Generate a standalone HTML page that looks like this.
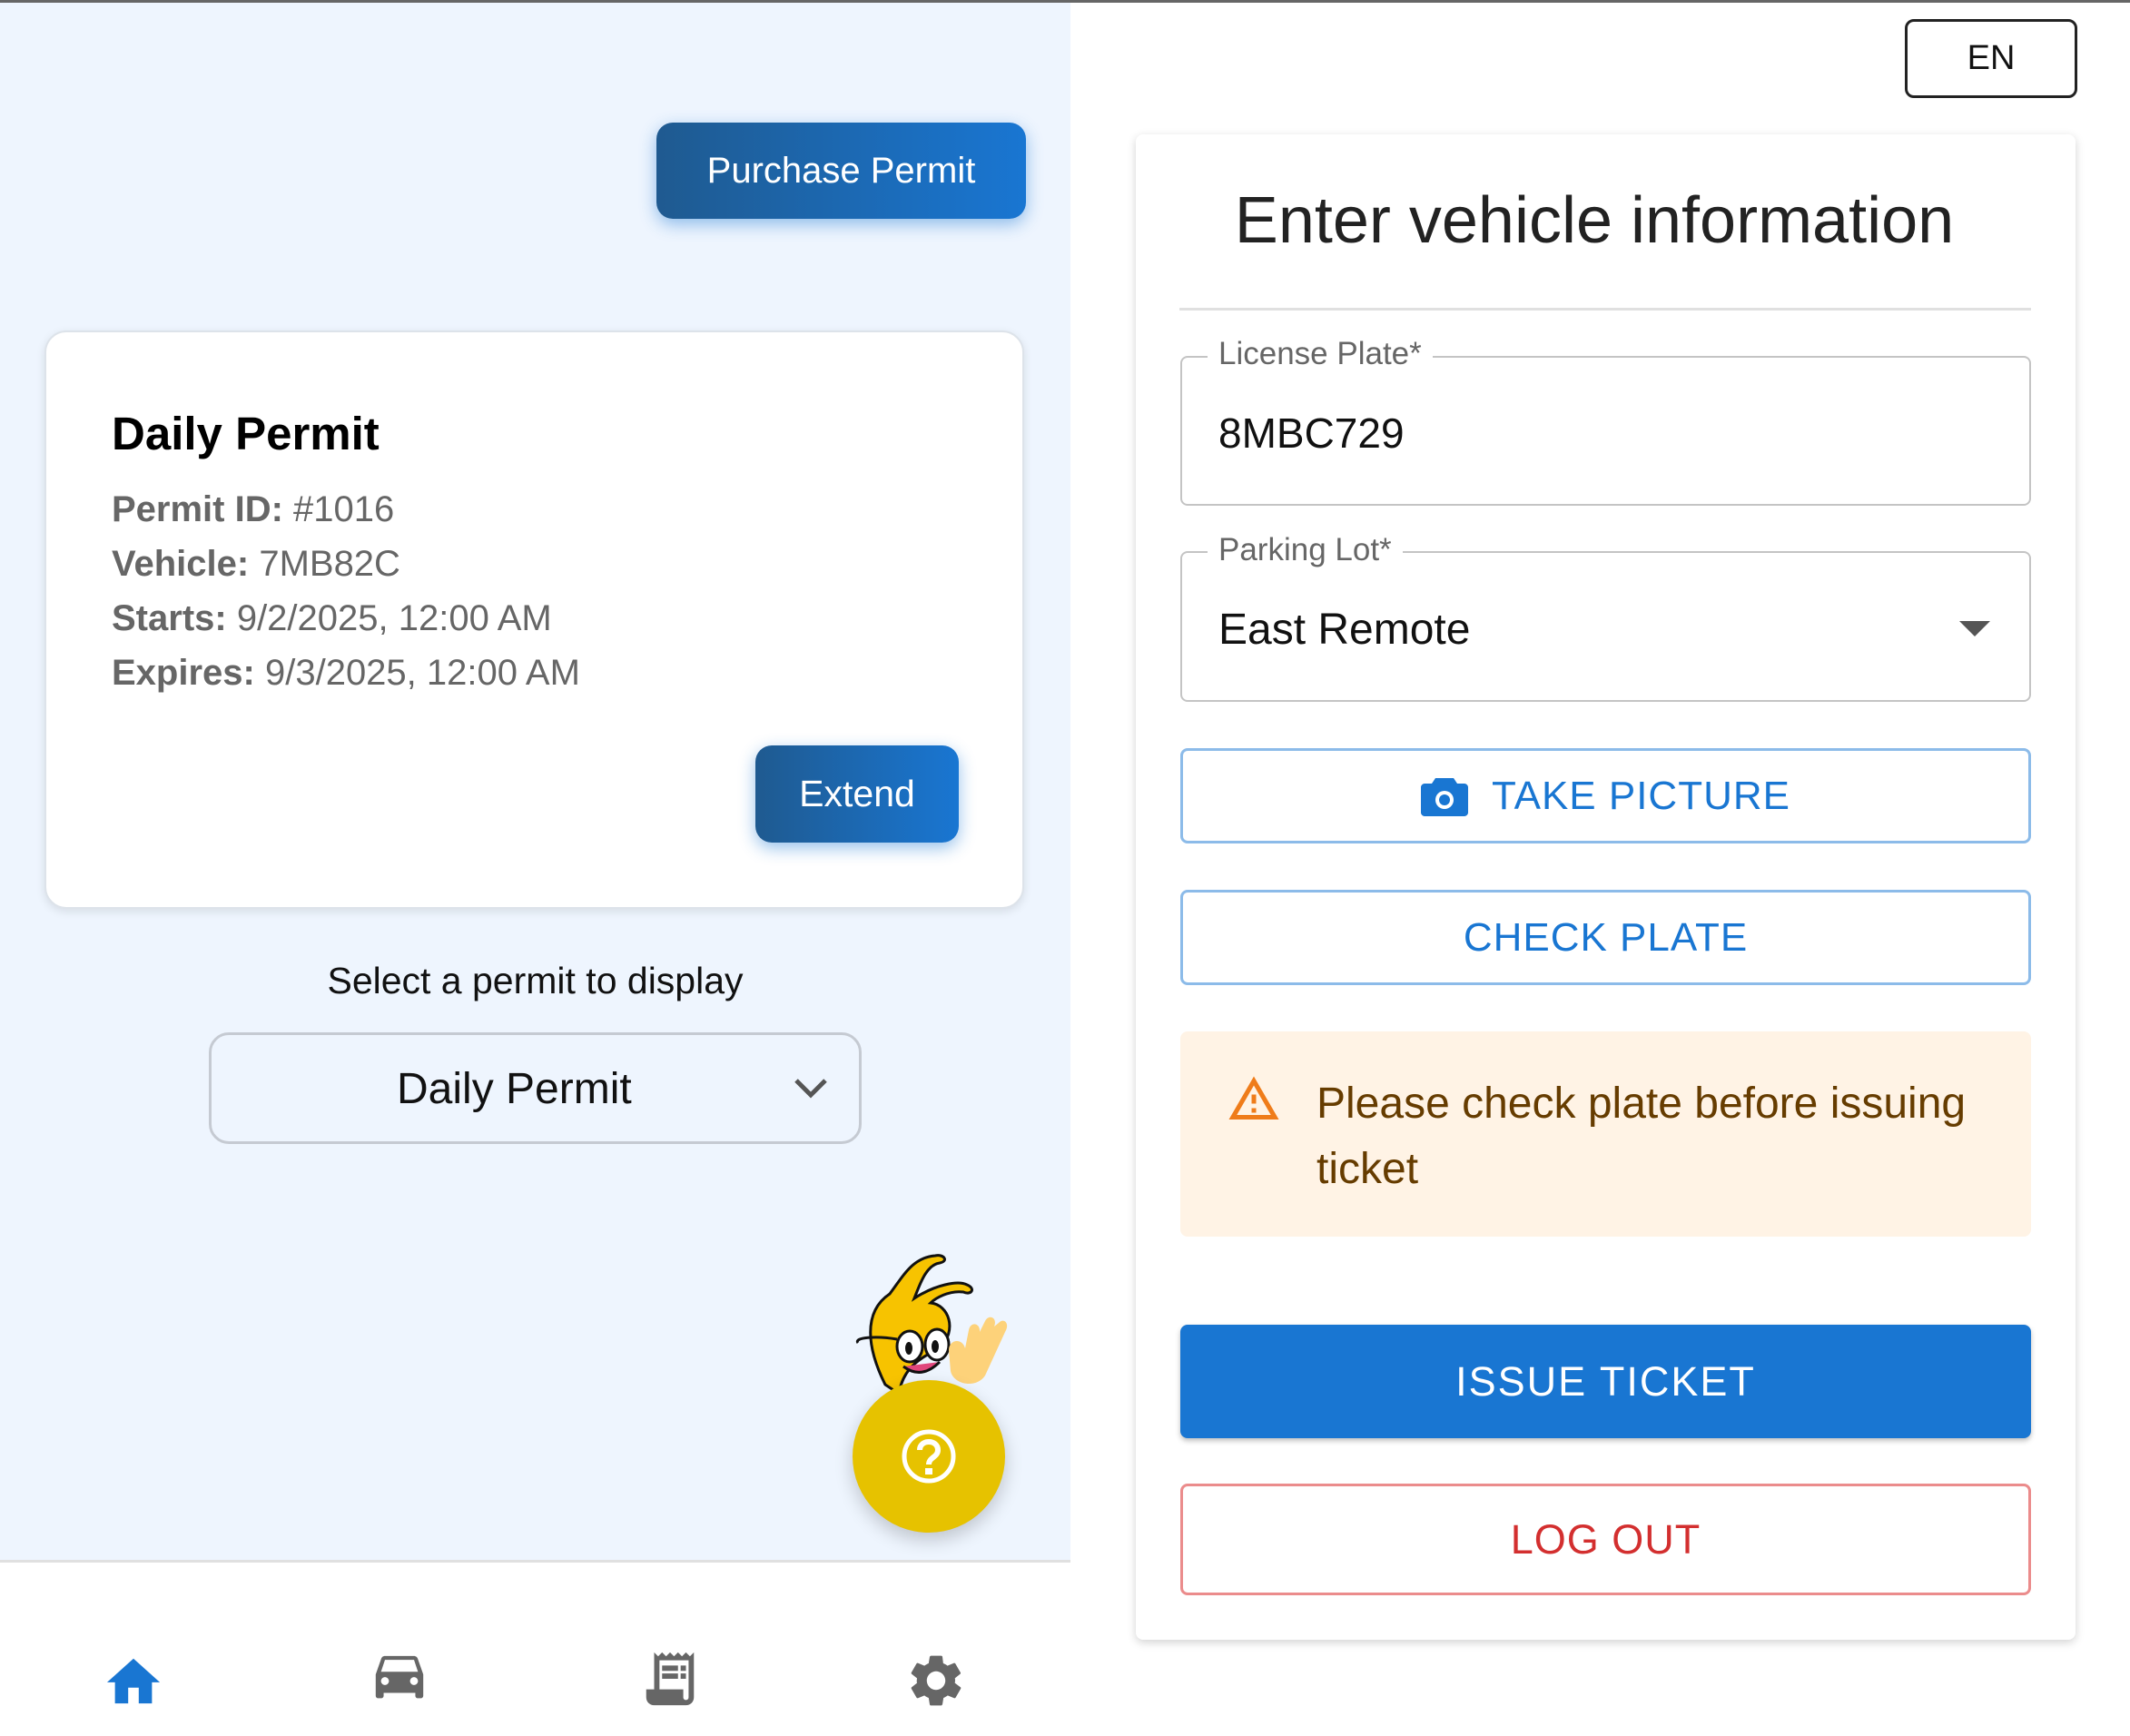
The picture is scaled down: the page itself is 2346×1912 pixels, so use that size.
<!DOCTYPE html>
<html><head><meta charset="utf-8"><style>
*{margin:0;padding:0;box-sizing:border-box}
body{width:2346px;height:1912px;position:relative;overflow:hidden;background:#fff;font-family:"Liberation Sans",sans-serif}
.a{position:absolute}
.c{display:flex;align-items:center;justify-content:center}
</style></head><body>
<div class="a" style="left:0;top:0;width:1179px;height:1720px;background:#eef5fe"></div>
<div class="a" style="left:0;top:0;width:2346px;height:3px;background:#666"></div>
<div class="a" style="left:0;top:1718px;width:1179px;height:3px;background:#e0e0e0"></div>

<div class="a c" style="left:723px;top:135px;width:407px;height:106px;border-radius:18px;background:linear-gradient(90deg,#1f5a90,#1976d2);color:#fff;font-size:40px;box-shadow:0 6px 18px rgba(25,118,210,.45)">Purchase Permit</div>

<div class="a" style="left:49px;top:364px;width:1079px;height:637px;background:#fff;border:2px solid #dde3ea;border-radius:24px;box-shadow:0 3px 10px rgba(0,0,0,.1)"></div>
<div class="a" style="left:123px;top:448px;font-size:51px;font-weight:bold;color:#000">Daily Permit</div>
<div class="a" style="left:123px;top:531px;font-size:40px;color:#666;line-height:60px">
<div><b>Permit ID:</b> #1016</div><div><b>Vehicle:</b> 7MB82C</div><div><b>Starts:</b> 9/2/2025, 12:00 AM</div><div><b>Expires:</b> 9/3/2025, 12:00 AM</div></div>
<div class="a c" style="left:832px;top:821px;width:224px;height:107px;border-radius:18px;background:linear-gradient(90deg,#1f5a90,#1976d2);color:#fff;font-size:41px;box-shadow:0 6px 18px rgba(25,118,210,.45)">Extend</div>

<div class="a" style="left:0;width:1179px;top:1057px;text-align:center;font-size:41px;color:#111">Select a permit to display</div>
<div class="a" style="left:230px;top:1137px;width:719px;height:123px;border:3px solid #c5cad2;border-radius:22px"></div>
<div class="a" style="left:437px;top:1172px;font-size:48px;color:#111">Daily Permit</div>
<svg class="a" style="left:873px;top:1186px" width="40" height="26" viewBox="0 0 40 26"><path d="M4 4 L20 20 L36 4" stroke="#555" stroke-width="5" fill="none"/></svg>

<!-- mascot -->
<svg class="a" style="left:935px;top:1375px" width="190" height="180" viewBox="0 0 190 180">
<path d="M40 150 C20 110 15 70 45 50 C60 30 70 10 95 8 C105 6 110 14 100 16 C85 18 78 40 72 55 C95 40 120 35 130 40 C140 44 135 52 126 48 C110 46 95 55 90 60 C110 62 120 90 100 110 C80 120 60 130 55 160 Z" fill="#f7c300" stroke="#111" stroke-width="3"/>
<ellipse cx="67" cy="108" rx="14" ry="17" fill="#fff" stroke="#111" stroke-width="3"/>
<ellipse cx="97" cy="106" rx="13" ry="17" fill="#fff" stroke="#111" stroke-width="3"/>
<ellipse cx="66" cy="110" rx="4" ry="7" fill="#111"/><ellipse cx="95" cy="108" rx="4" ry="7" fill="#111"/>
<path d="M10 104 C5 98 30 96 53 100" stroke="#111" stroke-width="3" fill="none"/>
<path d="M60 130 Q80 145 100 125" stroke="#111" stroke-width="3" fill="#e0467c"/>
<path d="M110 112 C110 100 125 98 128 110 L132 90 C134 80 145 82 144 92 L150 80 C154 72 164 76 160 86 L165 82 C170 76 178 82 172 92 L150 140 C140 155 115 150 112 135 Z" fill="#fdd27a"/>
</svg>
<div class="a c" style="left:939px;top:1520px;width:168px;height:168px;border-radius:50%;background:#e6c200;box-shadow:0 8px 20px rgba(0,0,0,.2)">
<svg width="64" height="64" viewBox="0 0 64 64"><circle cx="32" cy="32" r="27" stroke="#fff" stroke-width="5" fill="none"/><path d="M22 25 C22 13 42 13 42 25 C42 33 32 33 32 41" stroke="#fff" stroke-width="6" fill="none"/><rect x="28" y="45" width="8" height="7" fill="#fff"/></svg></div>

<!-- bottom nav -->
<svg class="a" style="left:112px;top:1818px" width="70" height="64" viewBox="0 0 24 22"><path d="M10 20v-6h4v6h5v-8h3L12 3 2 12h3v8z" fill="#1976d2"/></svg>
<svg class="a" style="left:405px;top:1818px" width="70" height="64" viewBox="0 0 24 22"><path d="M18.9 3C18.7 2.4 18.1 2 17.5 2h-11c-.7 0-1.2.4-1.4 1L3 9v8c0 .6.4 1 1 1h1c.6 0 1-.4 1-1v-1h12v1c0 .6.4 1 1 1h1c.6 0 1-.4 1-1V9l-2.1-6zM6.5 13c-.8 0-1.5-.7-1.5-1.5S5.7 10 6.5 10s1.5.7 1.5 1.5S7.3 13 6.5 13zm11 0c-.8 0-1.5-.7-1.5-1.5s.7-1.5 1.5-1.5 1.5.7 1.5 1.5-.7 1.5-1.5 1.5zM5 8l1.5-4.5h11L19 8H5z" fill="#666"/></svg>
<svg class="a" style="left:703px;top:1813px" width="70" height="72" viewBox="0 0 24 24"><path d="M19.5 3.5 18 2l-1.5 1.5L15 2l-1.5 1.5L12 2l-1.5 1.5L9 2 7.5 3.5 6 2v14H3v3c0 1.7 1.3 3 3 3h12c1.7 0 3-1.3 3-3V2zM19 19c0 .6-.4 1-1 1s-1-.4-1-1v-3H8V5h11zM9 7h6v2H9zm7 0h2v2h-2zm-7 3h6v2H9zm7 0h2v2h-2z" fill="#666"/></svg>
<svg class="a" style="left:996px;top:1816px" width="70" height="70" viewBox="0 0 24 24"><path d="M19.1 12.9c0-.3.1-.6.1-.9s0-.6-.1-.9l2-1.6c.2-.1.2-.4.1-.6l-1.9-3.3c-.1-.2-.4-.3-.6-.2l-2.4 1c-.5-.4-1-.7-1.6-.9L14.4 3c0-.2-.2-.4-.5-.4h-3.8c-.2 0-.4.2-.5.4l-.4 2.5c-.6.2-1.1.6-1.6.9l-2.4-1c-.2-.1-.5 0-.6.2L2.7 8.9c-.1.2-.1.5.1.6l2 1.6c0 .3-.1.6-.1.9s0 .6.1.9l-2 1.6c-.2.1-.2.4-.1.6l1.9 3.3c.1.2.4.3.6.2l2.4-1c.5.4 1 .7 1.6.9l.4 2.5c0 .2.2.4.5.4h3.8c.2 0 .4-.2.5-.4l.4-2.5c.6-.2 1.1-.6 1.6-.9l2.4 1c.2.1.5 0 .6-.2l1.9-3.3c.1-.2.1-.5-.1-.6zM12 15.5c-1.9 0-3.5-1.6-3.5-3.5s1.6-3.5 3.5-3.5 3.5 1.6 3.5 3.5-1.6 3.5-3.5 3.5z" fill="#666"/></svg>

<!-- right -->
<div class="a c" style="left:2098px;top:21px;width:190px;height:87px;border:3px solid #222;border-radius:10px;font-size:38px;color:#111">EN</div>
<div class="a" style="left:1251px;top:148px;width:1035px;height:1658px;background:#fff;border-radius:8px;box-shadow:0 3px 10px rgba(0,0,0,.18)"></div>
<div class="a" style="left:1251px;width:1010px;top:202px;text-align:center;font-size:72px;color:#222">Enter vehicle information</div>
<div class="a" style="left:1299px;top:339px;width:938px;height:3px;background:#e0e0e0"></div>

<div class="a" style="left:1300px;top:392px;width:937px;height:165px;border:2px solid #c4c4c4;border-radius:8px"></div>
<div class="a" style="left:1330px;top:370px;padding:0 12px;background:#fff;font-size:35px;color:#666">License Plate*</div>
<div class="a" style="left:1342px;top:450px;font-size:46px;color:#111">8MBC729</div>

<div class="a" style="left:1300px;top:607px;width:937px;height:166px;border:2px solid #c4c4c4;border-radius:8px"></div>
<div class="a" style="left:1330px;top:586px;padding:0 12px;background:#fff;font-size:35px;color:#666">Parking Lot*</div>
<div class="a" style="left:1342px;top:666px;font-size:48px;color:#111">East Remote</div>
<svg class="a" style="left:2158px;top:684px" width="34" height="18"><path d="M0 0h34L17 17z" fill="#555"/></svg>

<div class="a c" style="left:1300px;top:824px;width:937px;height:105px;border:3px solid #8cbbe9;border-radius:8px;font-size:44px;color:#1976d2;letter-spacing:1px">
<svg width="52" height="44" viewBox="0 0 26 22" style="margin-right:26px"><path d="M8 1h10l2 3h4c1 0 2 1 2 2v14c0 1-1 2-2 2H2c-1 0-2-1-2-2V6c0-1 1-2 2-2h4z" fill="#1976d2"/><circle cx="13" cy="13" r="5" fill="#fff"/><circle cx="13" cy="13" r="3" fill="#1976d2"/></svg>TAKE PICTURE</div>
<div class="a c" style="left:1300px;top:980px;width:937px;height:105px;border:3px solid #8cbbe9;border-radius:8px;font-size:44px;color:#1976d2;letter-spacing:1px">CHECK PLATE</div>

<div class="a" style="left:1300px;top:1136px;width:937px;height:226px;background:#fff3e5;border-radius:8px"></div>
<svg class="a" style="left:1351px;top:1180px" width="60" height="56" viewBox="0 0 24 22"><path d="M12 2 1 21h22zM12 6l7.5 13h-15z" fill="#ef7c1a"/><rect x="11" y="10" width="2" height="4" fill="#ef7c1a"/><rect x="11" y="16" width="2" height="2" fill="#ef7c1a"/></svg>
<div class="a" style="left:1450px;top:1180px;width:780px;font-size:48px;line-height:72px;color:#663c00">Please check plate before issuing ticket</div>

<div class="a c" style="left:1300px;top:1459px;width:937px;height:125px;background:#1976d2;border-radius:8px;font-size:45px;color:#fff;letter-spacing:2px;box-shadow:0 3px 6px rgba(0,0,0,.25)">ISSUE TICKET</div>
<div class="a c" style="left:1300px;top:1634px;width:937px;height:123px;border:3px solid #eb8c8c;border-radius:8px;font-size:45px;color:#d32f2f;letter-spacing:1px">LOG OUT</div>
</body></html>
